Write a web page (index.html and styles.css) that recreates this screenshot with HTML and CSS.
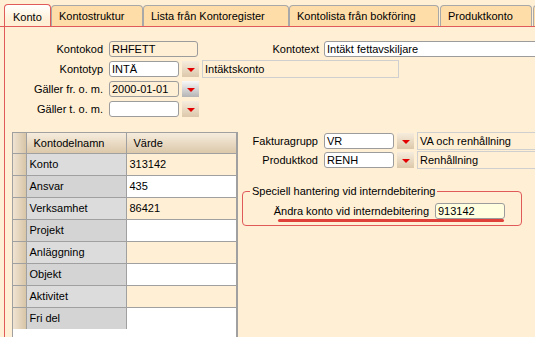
FILE: index.html
```html
<!DOCTYPE html>
<html lang="sv">
<head>
  <meta charset="UTF-8">
  <title>Konto</title>
  <link rel="stylesheet" href="styles.css">
</head>
<body>
  <div class="tab-bar">
    <div class="tab active">Konto</div>
    <div class="tab tab-struktur">Kontostruktur</div>
    <div class="tab tab-lista">Lista från Kontoregister</div>
    <div class="tab tab-bokf">Kontolista från bokföring</div>
    <div class="tab tab-produkt">Produktkonto</div>
    <div class="tab tab-more"></div>
  </div>

  <div class="panel">
    <div class="head-form">
      <div class="form-row">
        <span class="lbl">Kontokod</span>
        <span class="field readonly w-kod">RHFETT</span>
        <span class="lbl lbl-kontotext">Kontotext</span>
        <span class="field w-text">Intäkt fettavskiljare</span>
      </div>
      <div class="form-row">
        <span class="lbl">Kontotyp</span>
        <span class="field w-short">INTÄ</span>
        <span class="drop"></span>
        <span class="desc w-desc">Intäktskonto</span>
      </div>
      <div class="form-row">
        <span class="lbl">Gäller fr. o. m.</span>
        <span class="field readonly w-short">2000-01-01</span>
        <span class="drop hover"></span>
      </div>
      <div class="form-row">
        <span class="lbl">Gäller t. o. m.</span>
        <span class="field w-short"></span>
        <span class="drop"></span>
      </div>
    </div>

    <div class="lower">
      <div class="grid">
        <table class="grid-table">
          <colgroup>
            <col class="col-head">
            <col class="col-name">
            <col>
          </colgroup>
          <thead>
            <tr>
              <th class="row-head"></th>
              <th>Kontodelnamn</th>
              <th>Värde</th>
            </tr>
          </thead>
          <tbody>
            <tr><td class="row-head"></td><td class="name">Konto</td><td class="value">313142</td></tr>
            <tr><td class="row-head"></td><td class="name">Ansvar</td><td class="value">435</td></tr>
            <tr><td class="row-head"></td><td class="name">Verksamhet</td><td class="value">86421</td></tr>
            <tr><td class="row-head"></td><td class="name">Projekt</td><td class="value"></td></tr>
            <tr><td class="row-head"></td><td class="name">Anläggning</td><td class="value"></td></tr>
            <tr><td class="row-head"></td><td class="name">Objekt</td><td class="value"></td></tr>
            <tr><td class="row-head"></td><td class="name">Aktivitet</td><td class="value"></td></tr>
            <tr><td class="row-head"></td><td class="name">Fri del</td><td class="value"></td></tr>
          </tbody>
        </table>
      </div>

      <div class="side">
        <div class="form-row">
          <span class="lbl lbl-side">Fakturagrupp</span>
          <span class="field w-short">VR</span>
          <span class="drop"></span>
          <span class="desc w-side-desc">VA och renhållning</span>
        </div>
        <div class="form-row">
          <span class="lbl lbl-side">Produktkod</span>
          <span class="field w-short">RENH</span>
          <span class="drop"></span>
          <span class="desc w-side-desc">Renhållning</span>
        </div>

        <fieldset class="group">
          <legend>Speciell hantering vid interndebitering</legend>
          <div class="form-row group-row">
            <span class="lbl lbl-group">Ändra konto vid interndebitering</span>
            <span class="field edit w-group">913142</span>
          </div>
        </fieldset>
      </div>
    </div>
  </div>
</body>
</html>
```

FILE: styles.css
```css
:root {
  --bg: #FFEFD5;
  --tab: #FFDDA8;
  --red: #E05A5A;
  --tab-border: #A8A8A8;
  --field-border: #9C9C9C;
  --grid-line: #A0A0A0;
  --tan-gradient: linear-gradient(180deg, #F6ECDD 0%, #DCC8AA 100%);
}
body {
  margin: 0;
  width: 535px;
  height: 337px;
  overflow: hidden;
  background: var(--bg);
  font-family: "Liberation Sans", Arial, sans-serif;
  font-size: 11px;
  color: #000;
}

/* tabs */
.tab-bar {
  display: flex;
  align-items: flex-end;
  height: 22px;
  padding: 4px 0 0 4px;
  border-bottom: 1px solid var(--red);
  white-space: nowrap;
  overflow: hidden;
}
.tab {
  flex: none;
  box-sizing: border-box;
  height: 21px;
  padding-left: 7px;
  display: flex;
  align-items: center;
  background: var(--tab);
  border: 1px solid var(--tab-border);
  border-bottom: none;
  border-radius: 4px 4px 0 0;
}
.tab.active {
  width: 47px;
  height: 23px;
  margin-bottom: -1px;
  padding-left: 8px;
  padding-top: 1px;
  border-color: var(--red);
  background: linear-gradient(180deg, #FFFFFF 0%, var(--bg) 70%);
  position: relative;
}
.tab-struktur { width: 92px; }
.tab-lista { width: 146px; }
.tab-bokf { width: 150px; }
.tab-produkt { width: 92px; margin-left: 1px; }
.tab-more { width: 60px; margin-left: 1px; }

/* panel */
.panel {
  margin-left: 4px;
  border-left: 1px solid var(--red);
  height: 320px;
  padding-top: 14px;
  box-sizing: border-box;
}
.head-form {
  display: flex;
  flex-direction: column;
  gap: 4px;
}
.form-row {
  display: flex;
  align-items: center;
  height: 16px;
}
.lbl {
  flex: none;
  width: 98px;
  margin-right: 6px;
  text-align: right;
  white-space: nowrap;
}
.lbl-kontotext {
  width: 121px;
  margin-right: 5px;
}
.field {
  flex: none;
  box-sizing: border-box;
  height: 16px;
  line-height: 14px;
  padding: 0 2px;
  background: #fff;
  border: 1px solid var(--field-border);
  border-radius: 3px;
  white-space: nowrap;
  overflow: hidden;
}
.field.readonly {
  background: transparent;
}
.field.edit {
  background: #FFFFE0;
}
.w-kod { width: 89px; }
.w-text { width: 260px; }
.w-short { width: 70px; }
.drop {
  flex: none;
  width: 17px;
  height: 16px;
  margin-left: 3px;
  background: var(--tan-gradient);
  display: flex;
  align-items: center;
  justify-content: center;
}
.drop.hover {
  background: linear-gradient(180deg, #F8F8F8 0%, #B4B4B4 100%);
}
.drop::before {
  content: "";
  margin-top: 2px;
  border-left: 4px solid transparent;
  border-right: 4px solid transparent;
  border-top: 4px solid #E30000;
}
.desc {
  flex: none;
  box-sizing: border-box;
  height: 18px;
  line-height: 16px;
  margin-left: 3px;
  padding: 0 2px;
  border: 1px solid #CFCFCF;
  white-space: nowrap;
  overflow: hidden;
}
.w-desc { width: 197px; }
.w-side-desc { width: 200px; }

/* lower area */
.lower {
  display: flex;
  margin-top: 15px;
}
.grid {
  flex: none;
  width: 226px;
  height: 220px;
  margin-left: 7px;
  box-sizing: border-box;
  background: #fff;
  border: 1px solid var(--grid-line);
  border-right-width: 2px;
}
.grid-table {
  width: 100%;
  table-layout: fixed;
  border-collapse: collapse;
  border-style: hidden;
}
.col-head { width: 13px; }
.col-name { width: 100px; }
.grid-table th,
.grid-table td {
  border: 1px solid var(--grid-line);
  padding: 0 0 0 3px;
  text-align: left;
  font-weight: normal;
  white-space: nowrap;
  overflow: hidden;
}
.grid-table thead tr { height: 20px; }
.grid-table tbody tr { height: 22px; }
.grid-table th {
  padding-left: 7px;
  background: var(--tan-gradient);
}
.grid-table .row-head {
  padding: 0;
  background: linear-gradient(90deg, #EFE3D1 0%, #D8C5A7 100%);
}
.grid-table .name { background: #DCDCDC; }
.grid-table tbody tr:nth-child(even) .name { background: #D4D4D4; }
.grid-table .value { background: var(--bg); }
.grid-table tbody tr:nth-child(even) .value { background: #fff; }

.side {
  flex: 1;
  padding: 1px 0 0 4px;
  display: flex;
  flex-direction: column;
  gap: 3px;
}
.lbl-side { width: 76px; }

.group {
  margin: 14px 0 0 0;
  width: 280px;
  box-sizing: border-box;
  padding: 5px 16px 6px 7px;
  border: 1px solid var(--red);
  border-radius: 4px;
}
.group legend {
  padding: 0 2px;
  line-height: 13px;
}
.group-row {
  position: relative;
  justify-content: flex-end;
}
.group-row::after {
  content: "";
  position: absolute;
  left: 28px;
  right: 1px;
  top: 16px;
  height: 3px;
  border-radius: 2px;
  background: #E0403A;
}
.lbl-group { width: auto; }
.w-group { width: 70px; }
```
